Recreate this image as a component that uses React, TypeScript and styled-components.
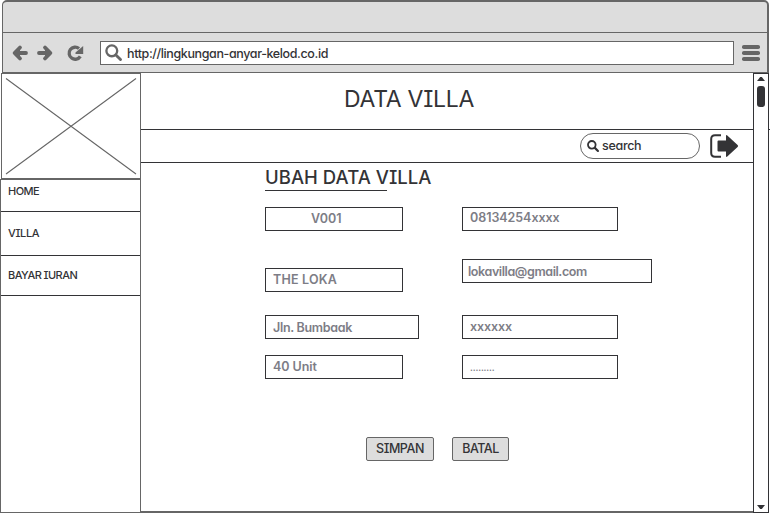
import React from 'react';
import styled, { createGlobalStyle } from 'styled-components';

const ink = '#333336';
const steel = '#666666';
const chrome = '#dddddd';

const GlobalStyle = createGlobalStyle`
  *, *::before, *::after { box-sizing: border-box; }
  body {
    margin: 0;
    background: #fff;
    color: ${ink};
    font-family: Inter, 'Liberation Sans', sans-serif;
    font-feature-settings: 'cv11', 'cv08';
    font-weight: 500;
    overflow: hidden;
  }
`;

const Page = styled.div`
  width: 770px;
  height: 513px;
  display: flex;
  flex-direction: column;
  background: #fff;
`;

const Chrome = styled.header`
  flex: none;
  width: 767px;
  height: 73px;
  margin-left: 2px;
  border: 2px solid ${steel};
  border-left-width: 1px;
  border-bottom-width: 1px;
  border-radius: 5px 5px 0 0;
  background: ${chrome};
`;

const TitleBar = styled.div`
  height: 31px;
  border-bottom: 1px solid ${steel};
`;

const Toolbar = styled.div`
  height: 39px;
  display: flex;
  align-items: center;
  padding-left: 9px;
`;

const ToolIcon = styled.svg<{ $gap?: number }>`
  display: block;
  flex: none;
  margin-right: ${p => p.$gap ?? 0}px;
  overflow: visible;
`;

const AddressBar = styled.div`
  flex: none;
  width: 634px;
  height: 24px;
  display: flex;
  align-items: center;
  padding-left: 4px;
  margin-right: 8px;
  border: 1px solid ${steel};
  background: #fff;
`;

const Label = styled.span<{ $size?: number; $track?: number; $left?: number; $drop?: number }>`
  font-size: ${p => p.$size ?? 12.5}px;
  letter-spacing: ${p => p.$track ?? 0}px;
  margin-left: ${p => p.$left ?? 0}px;
  padding-top: ${p => p.$drop ?? 0}px;
  white-space: pre;
`;

const Body = styled.div`
  height: 440px;
  display: flex;
`;

const Sidebar = styled.aside`
  flex: none;
  width: 141px;
  display: flex;
  flex-direction: column;
`;

const ImageBox = styled.div`
  height: 106px;
  margin-left: 1px;
  border: 1px solid ${steel};
`;

const Menu = styled.nav`
  height: 334px;
  border: 1px solid ${steel};
`;

const MenuItem = styled.a<{ $height: number; $top: number }>`
  display: block;
  height: ${p => p.$height}px;
  padding: ${p => p.$top}px 0 0 7px;
  border-bottom: 1px solid ${ink};
  line-height: 14px;
`;

const Main = styled.main`
  width: 612px;
  border-bottom: 2px solid ${steel};
`;

const HeaderRow = styled.div`
  width: 629px;
  height: 57px;
  padding: 12px 0 0 203px;
  border-bottom: 1px solid ${ink};
`;

const PageTitle = styled.h1`
  margin: 0;
  font-size: 23px;
  font-weight: 430;
  line-height: 28px;
  letter-spacing: -0.28px;
  white-space: nowrap;
`;

const ActionRow = styled.div`
  height: 33px;
  display: flex;
  justify-content: flex-end;
  align-items: center;
  gap: 10px;
  padding-right: 14px;
  border-bottom: 1px solid ${ink};
`;

const SearchBox = styled.div`
  width: 120px;
  height: 26px;
  display: flex;
  align-items: center;
  padding: 0 0 1px 6px;
  border: 1px solid ${steel};
  border-radius: 13px;
`;

const Content = styled.section`
  padding: 4px 0 0 124px;
`;

const SectionTitle = styled.h2`
  width: 122px;
  height: 24px;
  margin: 0;
  border-bottom: 1px solid ${ink};
  font-size: 18.5px;
  font-weight: 460;
  line-height: 20px;
  letter-spacing: 0.04px;
  white-space: nowrap;
`;

const Columns = styled.div`
  display: flex;
  gap: 43px;
  height: 188px;
  padding-top: 16px;
`;

const Column = styled.div<{ $width: number }>`
  width: ${p => p.$width}px;
`;

const Field = styled.div<{ $width: number; $gap?: number; $indent?: number; $lift?: number }>`
  width: ${p => p.$width}px;
  height: 24px;
  margin-bottom: ${p => p.$gap ?? 0}px;
  padding-left: ${p => p.$indent ?? 7}px;
  border: 1px solid ${ink};
  color: #7d7d86;
  font-weight: 560;
  line-height: ${p => 23 - (p.$lift ?? 0) * 2}px;
  display: flex;
`;

const Buttons = styled.div`
  display: flex;
  gap: 18px;
  padding: 58px 0 0 101px;
`;

const Button = styled.button<{ $width: number }>`
  width: ${p => p.$width}px;
  height: 24px;
  padding: 0 0 1px;
  border: 1px solid ${steel};
  border-radius: 2px;
  background: ${chrome};
  color: ${ink};
  font: inherit;
  display: flex;
  justify-content: center;
  align-items: center;
`;

const Scrollbar = styled.div`
  flex: none;
  width: 16px;
  display: flex;
  flex-direction: column;
  align-items: center;
  border: 1px solid ${ink};
  background: #fff;
`;

const Arrow = styled.div<{ $down?: boolean }>`
  width: 8px;
  height: 4px;
  margin: ${p => (p.$down ? 'auto 0 3px' : '3px 0 5px')};
  background: ${ink};
  clip-path: ${p => (p.$down ? 'polygon(0 0, 100% 0, 60% 100%, 40% 100%)' : 'polygon(40% 0, 60% 0, 100% 100%, 0 100%)')};
`;

const Thumb = styled.div`
  width: 8px;
  height: 21px;
  border-radius: 3px;
  background: ${ink};
`;

const Magnifier = ({ size, color, weight }: { size: number; color: string; weight: number }) => (
  <ToolIcon width={size} height={size} viewBox="0 0 16 16" fill="none" stroke={color} strokeLinecap="round">
    <circle cx="6.4" cy="6.4" r="5.1" strokeWidth={weight} />
    <path d="M10.5 10.5 14.6 14.6" strokeWidth={weight + 0.5} />
  </ToolIcon>
);

export default function App() {
  return (
    <>
      <GlobalStyle />
      <Page>
        <Chrome>
          <TitleBar />
          <Toolbar>
            <ToolIcon $gap={9} width="16" height="16" viewBox="0 0 16 16" fill={steel} stroke={steel} strokeWidth="3.8" strokeLinecap="round" strokeLinejoin="round">
              <path d="M8 2.500 2.600 8 8 13.500M4 8h10" />
            </ToolIcon>
            <ToolIcon $gap={14} width="16" height="16" viewBox="0 0 16 16" fill={steel} stroke={steel} strokeWidth="3.8" strokeLinecap="round" strokeLinejoin="round">
              <path d="M8 2.500 13.400 8 8 13.500M12 8H2" />
            </ToolIcon>
            <ToolIcon $gap={16} width="17" height="16" viewBox="0 0 17 16" fill="none" stroke={steel}>
              <path d="M13.300 11.300A6 6 0 1 1 12 3.600" strokeWidth="3.3" />
              <path d="M16.200 1v8H8.500V7.600z" fill={steel} stroke="none" />
            </ToolIcon>
            <AddressBar>
              <Magnifier size={17} color={steel} weight={2.2} />
              <Label $left={5} $track={-0.38} $drop={2}>http://lingkungan-anyar-kelod.co.id</Label>
            </AddressBar>
            <ToolIcon width="18" height="17" viewBox="0 0 18 17" fill={steel}>
              <rect width="18" height="4" y="1" rx="1.8" />
              <rect width="18" height="4" y="7" rx="1.8" />
              <rect width="18" height="4" y="13" rx="1.8" />
            </ToolIcon>
          </Toolbar>
        </Chrome>
        <Body>
          <Sidebar>
            <ImageBox>
              <ToolIcon width="138" height="104" viewBox="0 0 138 104" stroke={steel} fill="none">
                <path d="M4 4.500 134 100M134 4.500 4 100" strokeWidth="1.1" />
              </ToolIcon>
            </ImageBox>
            <Menu>
              <MenuItem $height={32} $top={2}><Label $size={11} $track={-0.55}>HOME</Label></MenuItem>
              <MenuItem $height={44} $top={12}><Label $size={11} $track={-0.35}>VILLA</Label></MenuItem>
              <MenuItem $height={40} $top={10}><Label $size={11} $track={-0.55}>BAYAR IURAN</Label></MenuItem>
            </Menu>
          </Sidebar>
          <Main>
            <HeaderRow><PageTitle>DATA VILLA</PageTitle></HeaderRow>
            <ActionRow>
              <SearchBox>
                <Magnifier size={12} color={ink} weight={2.4} />
                <Label $left={3} $track={-0.3}>search</Label>
              </SearchBox>
              <ToolIcon width="29" height="24" viewBox="0 0 29 24" fill={ink}>
                <path d="M11 1.200H5Q1.200 1.200 1.200 5v14q0 3.800 3.800 3.800h6" fill="none" stroke={ink} strokeWidth="2" />
                <path d="M7.500 7.500q0-1 1-1H16V2q0-1.600 1.300-.6L27.600 11q1 1 0 2L17.300 22.600q-1.300 1-1.300-.6v-4.500H8.500q-1 0-1-1z" />
              </ToolIcon>
            </ActionRow>
            <Content>
              <SectionTitle>UBAH DATA VILLA</SectionTitle>
              <Columns>
                <Column $width={154}>
                  <Field $width={138} $gap={37} $indent={45} $lift={1}><Label>V001</Label></Field>
                  <Field $width={138} $gap={23} $lift={1}><Label $track={0.2}>THE LOKA</Label></Field>
                  <Field $width={154} $gap={16}><Label $track={-0.3}>Jln. Bumbaak</Label></Field>
                  <Field $width={138} $lift={1}><Label $track={-0.05}>40 Unit</Label></Field>
                </Column>
                <Column $width={190}>
                  <Field $width={156} $gap={28} $lift={2}><Label $track={-0.05}>08134254xxxx</Label></Field>
                  <Field $width={190} $gap={32} $indent={5}><Label $track={-0.4}>lokavilla@gmail.com</Label></Field>
                  <Field $width={156} $gap={16} $lift={1}><Label $track={-0.1}>xxxxxx</Label></Field>
                  <Field $width={156}><Label $size={9} $track={-0.15}>.........</Label></Field>
                </Column>
              </Columns>
              <Buttons>
                <Button $width={68}><Label $track={-0.45}>SIMPAN</Label></Button>
                <Button $width={57}><Label $track={-0.5}>BATAL</Label></Button>
              </Buttons>
            </Content>
          </Main>
          <Scrollbar>
            <Arrow />
            <Thumb />
            <Arrow $down />
          </Scrollbar>
        </Body>
      </Page>
    </>
  );
}
